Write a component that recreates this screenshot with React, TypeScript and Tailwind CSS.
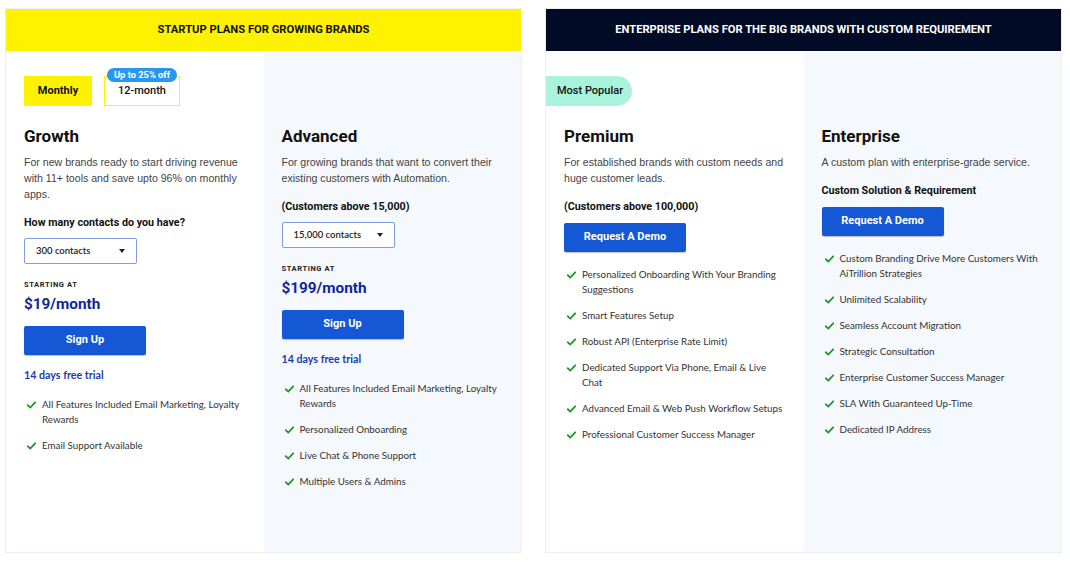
const roboto = "font-['Roboto',sans-serif]";

const Check = () => (
  <svg viewBox="0 0 12 10" className="w-[9px] h-[8px] shrink-0 mt-[4px]">
    <path d="M1.2 5.4 L4.4 8.4 L10.8 1.6" fill="none" stroke="#15961e" strokeWidth="2.4" strokeLinecap="square" />
  </svg>
);

const Features = ({ items, className = "" }: { items: string[]; className?: string }) => (
  <ul className={`flex flex-col gap-[11px] pr-[18px] ${className}`}>
    {items.map((t) => (
      <li key={t} className="flex items-start gap-[6px] pl-[3px]">
        <Check />
        <span className="font-['Lato',sans-serif] text-[9.8px] leading-[15px] text-[#333]">{t}</span>
      </li>
    ))}
  </ul>
);

const Select = ({ label, w }: { label: string; w: string }) => (
  <div
    className={`flex items-center justify-between ${w} h-[26px] px-[11px] border border-[#7f9de0] rounded-[2px] bg-white`}
  >
    <span className="font-['Lato',sans-serif] font-semibold text-[9.5px] text-[#222]">{label}</span>
    <span className="w-0 h-0 border-l-[3px] border-r-[3px] border-t-[4px] border-l-transparent border-r-transparent border-t-[#222]" />
  </div>
);

const BlueButton = ({ label, className = "" }: { label: string; className?: string }) => (
  <button
    className={`w-[122px] h-[29px] bg-[#1558d6] rounded-[2px] shadow-[0_1px_1px_rgba(0,0,0,0.25)] text-white ${roboto} font-bold text-[11px] ${className}`}
  >
    {label}
  </button>
);

const Title = ({ children }: { children: React.ReactNode }) => (
  <h2 className={`${roboto} font-bold text-[17px] leading-[22px] text-[#111]`}>{children}</h2>
);

const Desc = ({ children }: { children: React.ReactNode }) => (
  <p className="mt-[7px] font-['Liberation_Sans',Arial,sans-serif] text-[10.6px] leading-[16px] text-[#444] pr-[10px]">
    {children}
  </p>
);

const Label = ({ children, className = "" }: { children: React.ReactNode; className?: string }) => (
  <p className={`${roboto} font-bold text-[10.75px] leading-[16px] text-[#111] ${className}`}>{children}</p>
);

const Price = ({ amount, top }: { amount: string; top: string }) => (
  <>
    <p className={`${top} ${roboto} font-bold text-[7.5px] leading-[10px] tracking-[0.08em] text-[#222]`}>STARTING AT</p>
    <p className={`mt-[4px] ${roboto} font-bold text-[15.3px] leading-[20px] text-[#10279a]`}>{amount}</p>
  </>
);

const Trial = () => (
  <p className="mt-[12px] font-['Lato',sans-serif] font-bold text-[10.7px] leading-[16px] text-[#1a3ba8]">14 days free trial</p>
);

const Panel = ({
  heading,
  dark,
  children,
}: {
  heading: string;
  dark?: boolean;
  children: React.ReactNode;
}) => (
  <section className="w-[517px] h-[545px] flex flex-col border border-[#eceef5] bg-white">
    <div
      className={`h-[42px] shrink-0 flex items-center justify-center ${roboto} font-bold text-[11.2px] ${
        dark ? "bg-[#020b25] text-white" : "bg-[#fff200] text-[#111]"
      }`}
    >
      {heading}
    </div>
    <div className="flex-1 grid grid-cols-2">{children}</div>
  </section>
);

export default function App() {
  return (
    <div className="w-[1070px] h-[562px] bg-white flex gap-[23px] pt-[8px] pl-[5px]">
      <Panel heading="STARTUP PLANS FOR GROWING BRANDS">
        {/* Growth */}
        <div className="pl-[18px] pt-[17px]">
          <div className="flex items-end gap-[12px] h-[38px]">
            <div className={`w-[68px] h-[30px] bg-[#fff200] flex items-center justify-center ${roboto} font-bold text-[11px] text-[#111]`}>
              Monthly
            </div>
            <div className="relative w-[76px] h-[30px] border-[1.5px] border-[#fff200] bg-white flex items-center justify-center">
              <span className={`${roboto} font-medium text-[11px] text-[#111]`}>12-month</span>
              <span
                className={`absolute left-1/2 -translate-x-1/2 -top-[9px] whitespace-nowrap rounded-full bg-[#2a97ee] px-[7px] h-[14px] flex items-center ${roboto} font-bold text-[9.3px] text-white`}
              >
                Up to 25% off
              </span>
            </div>
          </div>
          <div className="mt-[19px]">
            <Title>Growth</Title>
            <Desc>For new brands ready to start driving revenue with 11+ tools and save upto 96% on monthly apps.</Desc>
            <Label className="mt-[13px]">How many contacts do you have?</Label>
            <div className="mt-[7px]">
              <Select label="300 contacts" w="w-[113px]" />
            </div>
            <Price amount="$19/month" top="mt-[16px]" />
            <BlueButton label="Sign Up" className="mt-[12px]" />
            <Trial />
            <Features
              className="mt-[14px]"
              items={["All Features Included Email Marketing, Loyalty Rewards", "Email Support Available"]}
            />
          </div>
        </div>

        {/* Advanced */}
        <div className="bg-[#f5f8fd] pl-[18px] pt-[74px]">
          <Title>Advanced</Title>
          <Desc>For growing brands that want to convert their existing customers with Automation.</Desc>
          <Label className="mt-[13px]">(Customers above 15,000)</Label>
          <div className="mt-[7px]">
            <Select label="15,000 contacts" w="w-[113px]" />
          </div>
          <Price amount="$199/month" top="mt-[16px]" />
          <BlueButton label="Sign Up" className="mt-[12px]" />
          <Trial />
          <Features
            className="mt-[14px]"
            items={[
              "All Features Included Email Marketing, Loyalty Rewards",
              "Personalized Onboarding",
              "Live Chat & Phone Support",
              "Multiple Users & Admins",
            ]}
          />
        </div>
      </Panel>

      <Panel heading="ENTERPRISE PLANS FOR THE BIG BRANDS WITH CUSTOM REQUIREMENT" dark>
        {/* Premium */}
        <div className="pt-[25px]">
          <div className={`w-[86px] h-[30px] bg-[#a9f3dc] rounded-r-full flex items-center pl-[11px] ${roboto} font-medium text-[11px] text-[#111]`}>
            Most Popular
          </div>
          <div className="pl-[18px] mt-[19px]">
            <Title>Premium</Title>
            <Desc>For established brands with custom needs and huge customer leads.</Desc>
            <Label className="mt-[13px]">(Customers above 100,000)</Label>
            <BlueButton label="Request A Demo" className="mt-[8px]" />
            <Features
              className="mt-[15px]"
              items={[
                "Personalized Onboarding With Your Branding Suggestions",
                "Smart Features Setup",
                "Robust API (Enterprise Rate Limit)",
                "Dedicated Support Via Phone, Email & Live Chat",
                "Advanced Email & Web Push Workflow Setups",
                "Professional Customer Success Manager",
              ]}
            />
          </div>
        </div>

        {/* Enterprise */}
        <div className="bg-[#f5f8fd] pl-[18px] pt-[74px]">
          <Title>Enterprise</Title>
          <Desc>A custom plan with enterprise-grade service.</Desc>
          <Label className="mt-[13px]">Custom Solution &amp; Requirement</Label>
          <BlueButton label="Request A Demo" className="mt-[8px]" />
          <Features
            className="mt-[15px]"
            items={[
              "Custom Branding Drive More Customers With AiTrillion Strategies",
              "Unlimited Scalability",
              "Seamless Account Migration",
              "Strategic Consultation",
              "Enterprise Customer Success Manager",
              "SLA With Guaranteed Up-Time",
              "Dedicated IP Address",
            ]}
          />
        </div>
      </Panel>
    </div>
  );
}
